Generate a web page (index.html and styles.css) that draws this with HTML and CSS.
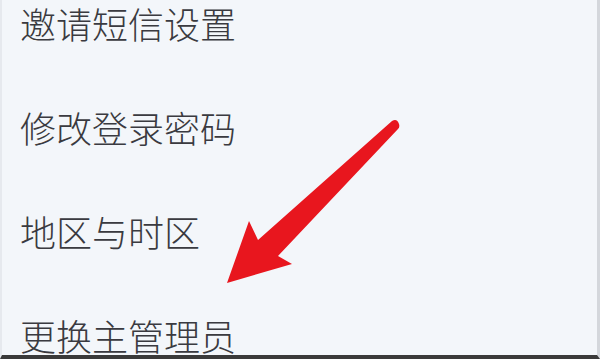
FILE: index.html
```html
<!DOCTYPE html>
<html lang="zh-CN">
<head>
<meta charset="utf-8">
<link rel="stylesheet" href="styles.css">
</head>
<body>
<div class="frame">
  <ul class="menu">
    <li class="item">邀请短信设置</li>
    <li class="item">修改登录密码</li>
    <li class="item">地区与时区</li>
    <li class="item">更换主管理员</li>
  </ul>
  <svg class="arrow" width="600" height="359" viewBox="0 0 600 359">
    <path d="M227 283 L249 221 L258 240 L392 121 Q397 118 399 124 Q400 127 398 129 L278 256 L292 264 Z" fill="#e8161e"/>
  </svg>
</div>
</body>
</html>
```
FILE: styles.css
```css
html, body {
  margin: 0;
  padding: 0;
  width: 600px;
  height: 359px;
  overflow: hidden;
  background: #f3f6fa;
}
.frame {
  position: relative;
  width: 600px;
  height: 359px;
  box-sizing: border-box;
  border-left: 2px solid #e6e9ee;
  border-right: 3px solid #d4d7dc;
  border-bottom: 4px solid #3a3a3a;
  overflow: hidden;
  background: #f3f6fa;
}
.menu {
  list-style: none;
  margin: 0;
  padding: 3px 0 0 18px;
  display: flex;
  flex-direction: column;
  gap: 64px;
}
.item {
  height: 40px;
  line-height: 40px;
  font-family: "Microsoft YaHei", "Noto Sans CJK SC", sans-serif;
  font-size: 36px;
  font-weight: 300;
  color: #3a3a40;
  white-space: nowrap;
}
.arrow {
  position: absolute;
  left: -2px;
  top: 0;
}
```
